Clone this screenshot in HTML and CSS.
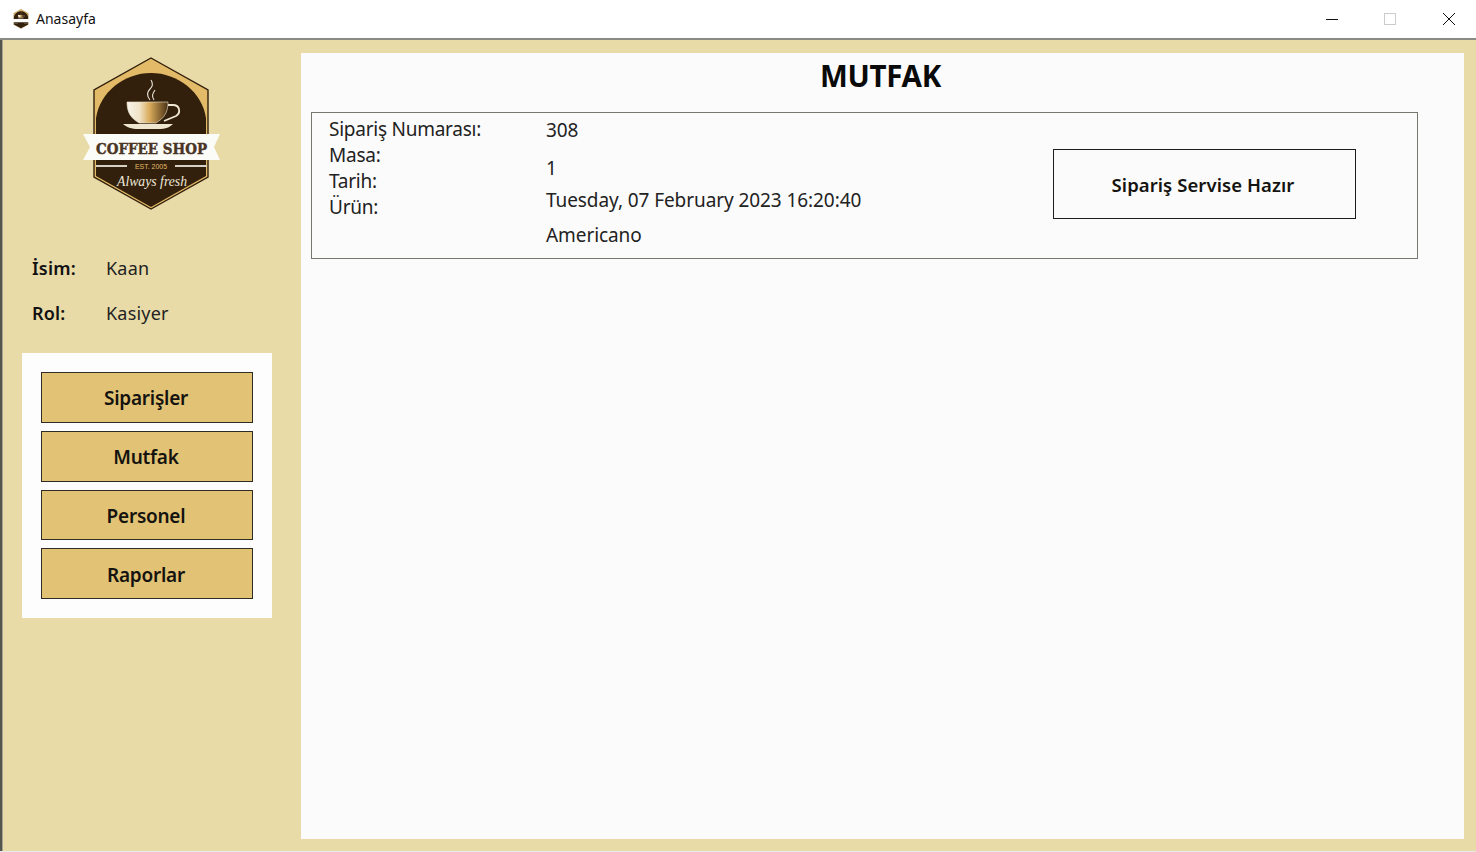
FILE: index.html
```html
<!DOCTYPE html>
<html lang="tr">
<head>
<meta charset="utf-8">
<title>Anasayfa</title>
<link rel="stylesheet" href="styles.css">
</head>
<body>
<svg width="0" height="0" class="defs">
  <defs>
    <linearGradient id="cup-fill" x1="0" y1="0" x2="1" y2="0">
      <stop offset="0" stop-color="#f8f4ea"/>
      <stop offset=".3" stop-color="#f0e4c8"/>
      <stop offset=".55" stop-color="#d9ab5c"/>
      <stop offset=".85" stop-color="#7a5a2c"/>
      <stop offset="1" stop-color="#4a3218"/>
    </linearGradient>
    <g id="logo-art">
      <polygon points="69,2 126,34 126,121 69,153 12,121 12,34" fill="#e3bb68" stroke="#33200c" stroke-width="1.4"/>
      <path d="M14 80V62C18 36 42 17 69 17C96 17 120 36 124 62V80Z" fill="#33200c"/>
      <polygon points="14,100 124,100 124,120 69,151 14,120" fill="#33200c"/>
      <path d="M68 44c-4-5 -3-8 0-11c3-3 3-6 1-9M72 44c-3-4 -1-7 1-10" fill="none" stroke="#e9e4d8" stroke-width="1.1"/>
      <path d="M45 46H86C86 57 82 62 74 67H57C49 62 45 57 45 46Z" fill="url(#cup-fill)" stroke="#efe6d0" stroke-width=".6"/>
      <path d="M86 49H91C98 49 99 57 94 60L82 65" fill="none" stroke="#f0e8d4" stroke-width="1.8"/>
      <path d="M41 68H91C88 71 84 73 76 73H56C50 73 44 71 41 68Z" fill="#efe6d0"/>
      <polygon points="1,78 138,78 132,91 138,104 1,104 8,91" fill="#fbfbf8"/>
      <rect x="14" y="109" width="31" height="2" fill="#d8d2c4"/>
      <rect x="93" y="109" width="32" height="2" fill="#d8d2c4"/>
    </g>
  </defs>
</svg>

<div class="window">
  <header class="titlebar">
    <div class="title-left">
      <svg class="app-icon" width="16" height="20" viewBox="8 0 122 156"><use href="#logo-art"/></svg>
      <span class="app-title">Anasayfa</span>
    </div>
    <div class="controls">
      <svg class="ctl" width="12" height="12" viewBox="0 0 12 12"><path d="M0 6.5H12" stroke="#111" fill="none"/></svg>
      <svg class="ctl" width="12" height="12" viewBox="0 0 12 12"><rect x=".5" y=".5" width="11" height="11" fill="none" stroke="#ccc"/></svg>
      <svg class="ctl ctl-close" width="12" height="12" viewBox="0 0 12 12"><path d="M0 0L12 12M12 0L0 12" stroke="#111" fill="none"/></svg>
    </div>
  </header>

  <div class="main">
    <aside class="sidebar">
      <svg class="logo" width="140" height="156" viewBox="0 0 140 156">
        <use href="#logo-art"/>
        <text x="14" y="98" class="logo-name" textLength="111" lengthAdjust="spacingAndGlyphs">COFFEE SHOP</text>
        <text x="53" y="113" class="logo-est" textLength="32" lengthAdjust="spacingAndGlyphs">EST. 2005</text>
        <text x="35" y="130" class="logo-tag" textLength="70" lengthAdjust="spacingAndGlyphs">Always fresh</text>
      </svg>
      <dl class="user">
        <div class="user-row"><dt>İsim:</dt><dd>Kaan</dd></div>
        <div class="user-row"><dt>Rol:</dt><dd>Kasiyer</dd></div>
      </dl>
      <nav class="menu">
        <button class="menu-btn">Siparişler</button>
        <button class="menu-btn">Mutfak</button>
        <button class="menu-btn">Personel</button>
        <button class="menu-btn">Raporlar</button>
      </nav>
    </aside>

    <main class="panel">
      <h1 class="heading">MUTFAK</h1>
      <section class="order">
        <div class="labels">
          <div>Sipariş Numarası:</div>
          <div>Masa:</div>
          <div>Tarih:</div>
          <div>Ürün:</div>
        </div>
        <div class="values">
          <div class="v-no">308</div>
          <div class="v-table">1</div>
          <div class="v-date">Tuesday, 07 February 2023 16:20:40</div>
          <div class="v-item">Americano</div>
        </div>
        <button class="ready">Sipariş Servise Hazır</button>
      </section>
    </main>
  </div>
  <div class="bottom-edge"></div>
</div>
</body>
</html>
```

FILE: styles.css
```css
* { box-sizing: border-box; }
html, body { margin: 0; height: 100%; overflow: hidden; }
body { font-family: "Noto Sans", "Open Sans", sans-serif; color: #111; background: #fff; }
.defs { position: absolute; }

.window { height: 852px; display: flex; flex-direction: column; }

.titlebar {
  height: 40px; flex: none; background: #fff; border-bottom: 2px solid #8b8b85;
  display: flex; align-items: center; justify-content: space-between;
  padding: 0 21px 0 13px;
}
.title-left { display: flex; align-items: center; gap: 7px; }
.app-icon { display: block; }
.app-title { font-size: 14px; color: #111; margin-bottom: 2px; }
.controls { display: flex; gap: 46px; }
.ctl { display: block; }
.ctl-close { margin-left: 1px; }

.main {
  flex: 1; min-height: 0; display: flex; background: #e8dba8;
  border-left: 2px solid #55554f;
  box-shadow: inset 1px 0 0 #a5a394;
  padding: 13px 12px 12px 0;
}

.sidebar { width: 299px; flex: none; display: flex; flex-direction: column; }
.logo { display: block; margin: 3px 0 0 80px; flex: none; }

.user { margin: 43px 0 0 30px; display: flex; flex-direction: column; gap: 19px; }
.user-row { display: flex; align-items: center; height: 26px; font-size: 18px; }
.user-row dt { width: 74px; font-weight: 600; letter-spacing: 0.2px; }
.user-row dd { margin: 0; color: #222; letter-spacing: 0.2px; }

.menu {
  width: 250px; height: 265px; margin: 27px 0 0 20px; padding: 19px;
  background: #fdfdfd; display: flex; flex-direction: column; gap: 8px;
}
.menu-btn {
  height: 50.75px; flex: none; background: #e2c274; border: 1.5px solid #2e2c24;
  font: 600 19px "Noto Sans", sans-serif; color: #14130f; padding: 2px 2px 0 0;
  letter-spacing: -0.25px;
}

.panel { flex: 1; min-width: 0; background: #fbfbfb; padding: 0 46px 0 10px; }
.heading {
  margin: 3px -32px 0 0; height: 50px; font-size: 29.5px; line-height: 40px; font-weight: 700;
  text-align: center; color: #0a0a0a; letter-spacing: -0.25px;
}
.order {
  height: 147px; border: 1.5px solid #77776f; display: flex;
  font-size: 19px; color: #222; margin-top: 6px;
}
.labels { width: 217px; flex: none; margin-left: 17px; padding-top: 3px; line-height: 26px; letter-spacing: -0.25px; }
.values { flex: none; width: 506px; line-height: 26px; letter-spacing: -0.08px; }
.v-no { margin-top: 4px; }
.v-table { margin-top: 12px; }
.v-date { margin-top: 6px; }
.v-item { margin-top: 9px; }
.ready {
  align-self: flex-start; width: 303px; height: 70px; margin-top: 36px; margin-left: 1px; flex: none;
  background: #fbfbfb; border: 1.5px solid #1c1c1c;
  font: 600 18.5px "Noto Sans", sans-serif; color: #14130f; letter-spacing: 0.08px; padding: 0 3px 0 0;
}
.bottom-edge { height: 1px; flex: none; background: #e9e9e9; }

.logo-name { font: 700 15px "DejaVu Serif", serif; fill: #4a3524; stroke: #4a3524; stroke-width: 0.45px; }
.logo-est { font: 500 8px "Liberation Sans", sans-serif; fill: #e3bb68; }
.logo-tag { font: italic 400 14px "Liberation Serif", serif; fill: #eee8da; }
```
